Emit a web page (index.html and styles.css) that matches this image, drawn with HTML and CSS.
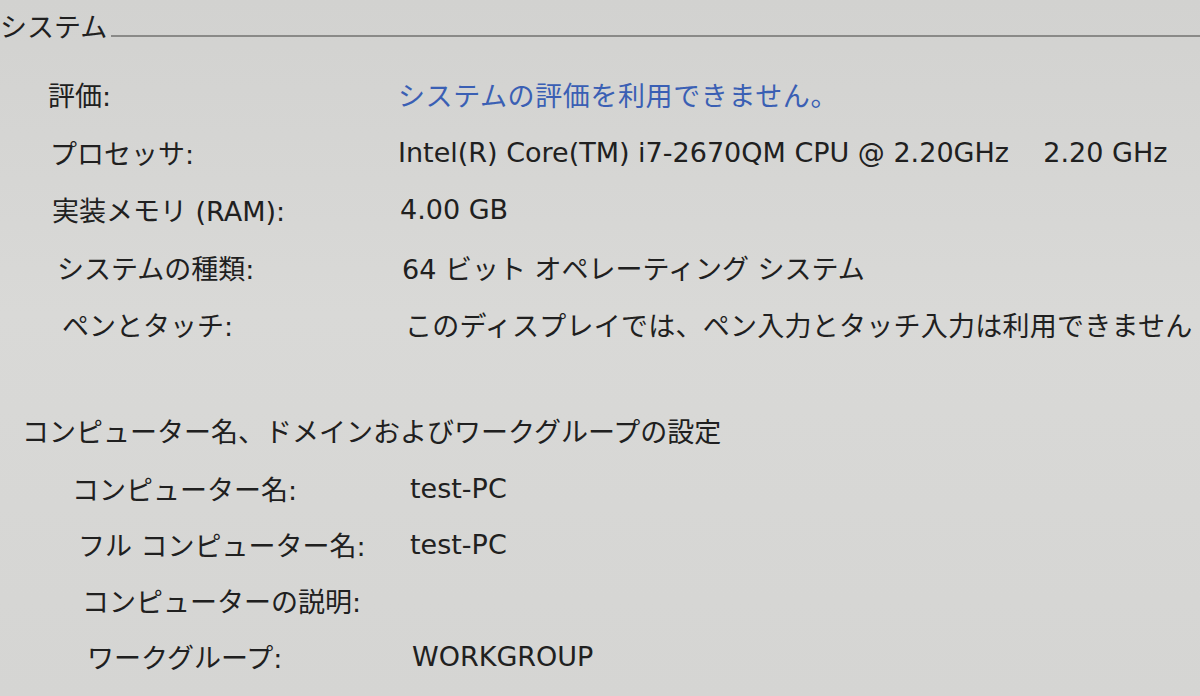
FILE: index.html
```html
<!DOCTYPE html>
<html lang="ja">
<head>
<meta charset="utf-8">
<title>システム</title>
<link rel="stylesheet" href="styles.css">
</head>
<body>
<main class="page">
  <div class="section-head">
    <span class="section-name">システム</span>
    <span class="rule"></span>
  </div>
  <div class="rows rows-system">
    <div class="row r1"><span class="label">評価:</span><span class="value link">システムの評価を利用できません。</span></div>
    <div class="row r2"><span class="label">プロセッサ:</span><span class="value">Intel(R) Core(TM) i7-2670QM CPU @ 2.20GHz&nbsp;&nbsp;&nbsp; 2.20 GHz</span></div>
    <div class="row r3"><span class="label">実装メモリ (RAM):</span><span class="value">4.00 GB</span></div>
    <div class="row r4"><span class="label">システムの種類:</span><span class="value">64 ビット オペレーティング システム</span></div>
    <div class="row r5"><span class="label">ペンとタッチ:</span><span class="value">このディスプレイでは、ペン入力とタッチ入力は利用できません</span></div>
  </div>
  <h2 class="section-title">コンピューター名、ドメインおよびワークグループの設定</h2>
  <div class="rows rows-computer">
    <div class="row r6"><span class="label">コンピューター名:</span><span class="value">test-PC</span></div>
    <div class="row r7"><span class="label">フル コンピューター名:</span><span class="value">test-PC</span></div>
    <div class="row r8"><span class="label">コンピューターの説明:</span><span class="value"></span></div>
    <div class="row r9"><span class="label">ワークグループ:</span><span class="value">WORKGROUP</span></div>
  </div>
</main>
</body>
</html>
```
FILE: styles.css
```css
html, body {
  margin: 0;
  padding: 0;
}
body {
  width: 1200px;
  height: 696px;
  overflow: hidden;
  background: linear-gradient(180deg, #d2d2d0 0%, #d9d9d7 45%, #d5d5d3 100%);
  color: #202020;
  font-family: "DejaVu Sans", "Noto Sans CJK JP", sans-serif;
  font-size: 27px;
}
.page {
  display: flex;
  flex-direction: column;
}
.section-head {
  display: flex;
  align-items: center;
  height: 56px;
}
.section-name {
  line-height: 56px;
  white-space: nowrap;
  font-size: 27px;
}
.rule {
  flex: 1;
  height: 2px;
  background: #8a8a88;
  margin-left: 4px;
  margin-top: 16px;
}
.rows-system {
  margin-top: 10px;
}
.row {
  display: flex;
  align-items: center;
  white-space: nowrap;
}
.rows-system .row { height: 57.5px; }
.rows-computer .row { height: 56px; }
.label { flex: none; }
.value { flex: none; }
.link { color: #3a5fb4; letter-spacing: 0.6px; }
.r5 .value { letter-spacing: 0.25px; }

.section-title {
  margin: 50px 0 0 22px;
  font-size: 27px;
  font-weight: normal;
  line-height: 57px;
  white-space: nowrap;
}

.r1 { padding-left: 48px; }
.r1 .label { width: 350px; }
.r2 { padding-left: 50px; }
.r2 .label { width: 348px; }
.r3 { padding-left: 52px; }
.r3 .label { width: 348px; }
.r4 { padding-left: 57px; }
.r4 .label { width: 345px; }
.r5 { padding-left: 62px; }
.r5 .label { width: 343px; }
.r6 { padding-left: 72px; }
.r6 .label { width: 338px; }
.r7 { padding-left: 78px; }
.r7 .label { width: 332px; }
.r8 { padding-left: 82px; }
.r8 .label { width: 330px; }
.r9 { padding-left: 87px; }
.r9 .label { width: 325px; }
```
